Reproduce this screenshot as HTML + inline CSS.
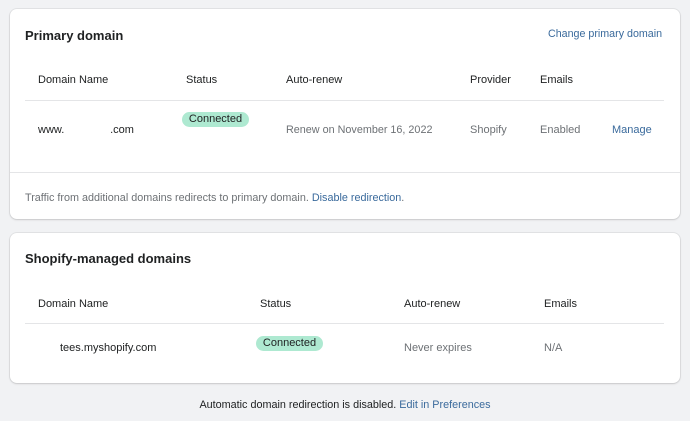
<!DOCTYPE html>
<html><head><style>
body{margin:0;width:690px;height:421px;background:#f1f2f4;font-family:"Liberation Sans",sans-serif;position:relative;overflow:hidden;color:#202223}
.card{position:absolute;left:10px;width:670px;background:#fff;border-radius:7px;box-shadow:0 0 0 1px rgba(0,0,0,.06),0 1px 2px rgba(0,0,0,.12)}
.t{position:absolute;white-space:nowrap;font-size:11px;line-height:14px}
.h{font-size:13px;font-weight:bold;color:#202223}
.th{color:#202223}
.g{color:#6d7175}
.l{color:#3a6a9c}
.line{position:absolute;left:15px;right:16px;height:1px;background:#e4e5e7}
.badge{position:absolute;background:#aee9d1;border-radius:9px;height:15px;font-size:11px;line-height:15px;text-align:center;color:#202223}
</style></head><body>
<div class="card" style="top:9px;height:210px">
 <div class="t h" style="left:15px;top:19px;line-height:16px">Primary domain</div>
 <div class="t l" style="left:538px;top:18px;font-size:10.7px">Change primary domain</div>
 <div class="t th" style="left:28px;top:64px">Domain Name</div>
 <div class="t th" style="left:176px;top:64px">Status</div>
 <div class="t th" style="left:276px;top:64px">Auto-renew</div>
 <div class="t th" style="left:460px;top:64px">Provider</div>
 <div class="t th" style="left:530px;top:64px">Emails</div>
 <div class="line" style="top:91px"></div>
 <div class="t" style="left:28px;top:114px">www.&nbsp;&nbsp;&nbsp;&nbsp;&nbsp;&nbsp;&nbsp;&nbsp;&nbsp;&nbsp;&nbsp;&nbsp;&nbsp;&nbsp;&nbsp;.com</div>
 <div class="badge" style="left:172px;top:103px;width:67px">Connected</div>
 <div class="t g" style="left:276px;top:114px;font-size:10.8px">Renew on November 16, 2022</div>
 <div class="t g" style="left:460px;top:114px">Shopify</div>
 <div class="t g" style="left:530px;top:114px">Enabled</div>
 <div class="t l" style="left:602px;top:114px">Manage</div>
 <div class="line" style="top:163px;left:0;right:0"></div>
 <div class="t g" style="left:15px;top:182px;font-size:10.8px">Traffic from additional domains redirects to primary domain. <span class="l">Disable redirection</span>.</div>
</div>
<div class="card" style="top:233px;height:150px">
 <div class="t h" style="left:15px;top:18px;line-height:16px">Shopify-managed domains</div>
 <div class="t th" style="left:28px;top:64px">Domain Name</div>
 <div class="t th" style="left:250px;top:64px">Status</div>
 <div class="t th" style="left:394px;top:64px">Auto-renew</div>
 <div class="t th" style="left:534px;top:64px">Emails</div>
 <div class="line" style="top:90px"></div>
 <div class="t" style="left:50px;top:108px">tees.myshopify.com</div>
 <div class="badge" style="left:246px;top:103px;width:67px">Connected</div>
 <div class="t g" style="left:394px;top:108px">Never expires</div>
 <div class="t g" style="left:534px;top:108px">N/A</div>
</div>
<div class="t" style="left:0;right:0;text-align:center;top:398px;font-size:10.8px">Automatic domain redirection is disabled. <span class="l">Edit in Preferences</span></div>
</body></html>
